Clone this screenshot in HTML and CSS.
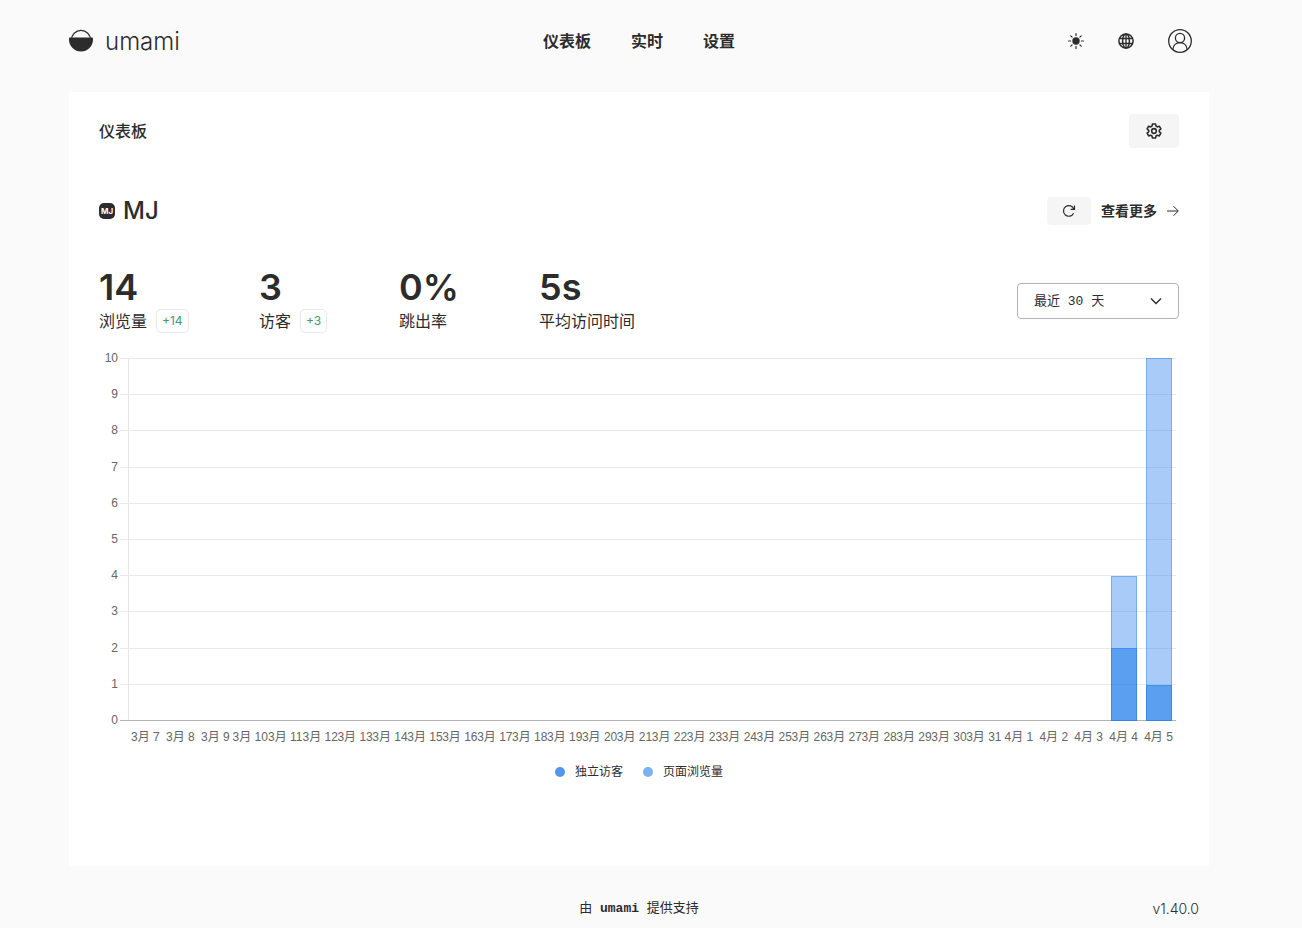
FILE: index.html
```html
<!DOCTYPE html>
<html lang="zh-CN">
<head>
<meta charset="utf-8">
<meta name="viewport" content="width=device-width, initial-scale=1">
<title>umami</title>
<link rel="stylesheet" href="styles.css">
</head>
<body>
<div class="container">
  <header class="header">
    <a class="brand" href="#">
      <svg width="24" height="24" viewBox="0 0 24 24" aria-hidden="true"><circle cx="12" cy="11" r="9.6" fill="none" stroke="#2c2c2c" stroke-width="1.200"/><path d="M0.6 8.600Q0 8.600 0 9.400V10.500a12 12 0 0 0 24 0V9.400Q24 8.600 23.400 8.600Z" fill="#2c2c2c"/></svg>
      <span>umami</span>
    </a>
    <nav class="nav"><a href="#">仪表板</a><a href="#">实时</a><a href="#">设置</a></nav>
    <div class="tools">
      <button class="icon-button" aria-label="主题"><svg width="16" height="16" viewBox="0 0 16 16" stroke="#2c2c2c" stroke-width="1.200" stroke-linecap="round"><circle cx="8" cy="8" r="3.700" fill="#2c2c2c" stroke="none"/><path d="M8 .6v2M8 13.400v2M.6 8h2M13.400 8h2M2.800 2.800l1.300 1.300M11.900 11.900l1.300 1.300M2.800 13.200l1.300-1.300M11.900 4.100l1.300-1.300"/></svg></button>
      <button class="icon-button" aria-label="语言"><svg width="16" height="16" viewBox="0 0 16 16" fill="none" stroke="#2c2c2c" stroke-width="1.500"><circle cx="8" cy="8" r="7.100"/><ellipse cx="8" cy="8" rx="3.400" ry="7.100"/><path d="M8 .8v14.400M1.300 5.500h13.400M1.300 10.500h13.400" stroke-width="1.300"/></svg></button>
      <button class="icon-button profile" aria-label="账户"><svg width="24" height="24" viewBox="0 0 24 24" fill="none" stroke="#2c2c2c" stroke-width="1.300"><circle cx="12" cy="12" r="11.300"/><circle cx="12" cy="9" r="4.600"/><path d="M4.800 20.600c.4-4.200 3.300-7 7.200-7s6.800 2.800 7.200 7"/></svg></button>
    </div>
  </header>

  <main class="card">
    <div class="row title-row">
      <h1>仪表板</h1>
      <button class="settings" aria-label="设置"><svg width="16" height="16" viewBox="0 0 24 24" fill="none" stroke="#2c2c2c" stroke-width="2.400" stroke-linejoin="round"><circle cx="12" cy="12" r="3.500"/><path d="M9.700 1.500h4.600l.7 3.200 1.900 1.100 3.100-1 2.300 4-2.400 2.200v2.100l2.400 2.200-2.300 4-3.100-1-1.900 1.100-.7 3.200H9.700L9 19.400l-1.900-1.100-3.100 1-2.300-4 2.400-2.200V11L1.700 8.800l2.300-4 3.100 1L9 4.700z"/></svg></button>
    </div>

    <div class="row site-row">
      <h2><span class="favicon">MJ</span>MJ</h2>
      <div class="site-actions">
        <button class="refresh" aria-label="刷新"><svg width="14" height="14" viewBox="0 0 14 14" fill="none" stroke="#2c2c2c" stroke-width="1.200"><path d="M11.600 9.200A5.300 5.300 0 1 1 11.800 5.200M12.500 1.400v4H8.600"/></svg></button>
        <a class="more" href="#">查看更多<svg width="12" height="12" viewBox="0 0 12 12" fill="none" stroke="#2c2c2c"><path d="M0 6h11M6.500 1.200L11.300 6l-4.800 4.800"/></svg></a>
      </div>
    </div>

    <div class="row stats-row">
      <div class="metrics">
        <div class="metric"><strong>14</strong><div class="label">浏览量<span class="change">+14</span></div></div>
        <div class="metric"><strong>3</strong><div class="label">访客<span class="change">+3</span></div></div>
        <div class="metric"><strong>0%</strong><div class="label">跳出率</div></div>
        <div class="metric"><strong>5s</strong><div class="label">平均访问时间</div></div>
      </div>
      <div class="select-wrap">
        <select aria-label="日期范围"><option>最近 30 天</option></select>
        <svg width="12" height="12" viewBox="0 0 12 12" fill="none" stroke="#2c2c2c" stroke-width="1.400"><path d="M1 3.500l5 5 5-5"/></svg>
      </div>
    </div>

    <div class="chart">
      <div class="y-axis"><span>10</span><span>9</span><span>8</span><span>7</span><span>6</span><span>5</span><span>4</span><span>3</span><span>2</span><span>1</span><span>0</span></div>
      <div class="plot">
        <div class="grid-lines"><i></i><i></i><i></i><i></i><i></i><i></i><i></i><i></i><i></i><i></i></div>
        <div class="bars">
          <div class="day day-29"><div class="views" style="height:40%"></div><div class="visitors" style="height:20%"></div></div>
          <div class="day day-30"><div class="views" style="height:100%"></div><div class="visitors" style="height:10%"></div></div>
        </div>
      </div>
      <div class="x-axis">
        <span>3月 7</span><span>3月 8</span><span>3月 9</span><span>3月 10</span><span>3月 11</span><span>3月 12</span><span>3月 13</span><span>3月 14</span><span>3月 15</span><span>3月 16</span><span>3月 17</span><span>3月 18</span><span>3月 19</span><span>3月 20</span><span>3月 21</span><span>3月 22</span><span>3月 23</span><span>3月 24</span><span>3月 25</span><span>3月 26</span><span>3月 27</span><span>3月 28</span><span>3月 29</span><span>3月 30</span><span>3月 31</span><span>4月 1</span><span>4月 2</span><span>4月 3</span><span>4月 4</span><span>4月 5</span>
      </div>
    </div>
    <div class="legend"><span class="key"><i class="dot"></i>独立访客</span><span class="key"><i class="dot light"></i>页面浏览量</span></div>
  </main>

  <footer class="footer">
    <p>由 <a href="#">umami</a> 提供支持</p>
    <a class="version" href="#">v1.40.0</a>
  </footer>
</div>
</body>
</html>
```
FILE: styles.css
```css
* { box-sizing: border-box; }
body {
  margin: 0;
  padding: 0 24px 0 0;
  background: #fafafa;
  color: #2c2c2c;
  font-family: Inter, "Noto Sans CJK SC", sans-serif;
  font-size: 16px;
}
a { color: inherit; text-decoration: none; }
button { border: 0; padding: 0; background: none; cursor: pointer; display: flex; align-items: center; justify-content: center; }
svg { display: block; flex: none; }
h1, h2, p { margin: 0; }

.container { max-width: 1140px; margin: 0 auto; }

.header {
  display: grid;
  grid-template-columns: 1fr auto 1fr;
  align-items: center;
  height: 82px;
  margin-bottom: 10px;
}
.brand { display: flex; align-items: center; gap: 12px; font-size: 24px; font-weight: 300; }
.nav { display: flex; gap: 40px; font-weight: 700; line-height: 24px; }
.tools { display: flex; align-items: center; justify-content: flex-end; gap: 34px; padding-right: 17px; }

.card { background: #fff; padding: 22px 30px 85px; }
.row { display: flex; align-items: center; justify-content: space-between; }
.title-row { margin-bottom: 49px; }
.title-row h1 { font-size: 16px; font-weight: 500; line-height: 24px; }
.settings { width: 50px; height: 34px; border-radius: 4px; background: #f5f5f5; }

.site-row h2 { display: flex; align-items: center; gap: 8px; font-size: 24px; font-weight: 500; line-height: 28px; }
.favicon {
  width: 16px;
  height: 16px;
  border-radius: 5px;
  background: #2c2c2c;
  color: #fff;
  font-size: 8px;
  font-weight: 700;
  line-height: 16px;
  text-align: center;
}
.site-actions { display: flex; align-items: center; gap: 10px; }
.refresh { width: 44px; height: 28px; border-radius: 4px; background: #f5f5f5; }
.more { display: flex; align-items: center; gap: 10px; font-size: 14px; font-weight: 700; line-height: 20px; }

.stats-row { margin-top: 41px; }
.metrics { display: grid; grid-template-columns: 160px 140px 140px auto; }
.metric strong { display: block; font-size: 36px; font-weight: 600; line-height: 43px; }
.label { display: flex; align-items: center; gap: 9px; height: 24px; line-height: 24px; white-space: nowrap; }
.change {
  padding: 0 5px;
  border: 1px solid #eaeaea;
  border-radius: 5px;
  color: #44987a;
  font-size: 12px;
  line-height: 22px;
}
.select-wrap { display: grid; align-items: center; width: 162px; margin-top: 3px; }
.select-wrap > * { grid-area: 1 / 1; }
.select-wrap svg { justify-self: end; margin-right: 17px; pointer-events: none; }
select {
  appearance: none;
  width: 100%;
  height: 36px;
  padding: 0 16px;
  border: 1px solid #b3b3b3;
  border-radius: 4px;
  background: #fff;
  color: #2c2c2c;
  font: 13px "Liberation Mono", "Noto Sans CJK SC", monospace;
}

.chart {
  display: grid;
  grid-template-columns: 29px 1fr;
  grid-template-rows: 363px 32px;
  margin-top: 25px;
  padding-right: 3px;
  color: #666;
  font: 12px/14px "Liberation Sans", "Noto Sans CJK SC", sans-serif;
}
.y-axis { display: flex; flex-direction: column; justify-content: space-between; margin: -7px 10px -6px 0; text-align: right; }
.plot { display: grid; border-left: 1px solid #e6e6e6; }
.grid-lines, .bars { grid-area: 1 / 1; }
.grid-lines { display: flex; flex-direction: column; margin-left: -9px; border-bottom: 1px solid #b3b3b3; }
.grid-lines i { flex: 1; border-top: 1px solid #eaeaea; }
.bars { display: grid; grid-template-columns: repeat(30, 1fr); }
.day { display: grid; margin: 0 4px 0 5px; }
.day-29 { grid-column: 29; }
.day-30 { grid-column: 30; }
.views, .visitors { grid-area: 1 / 1; align-self: end; border: 1px solid rgba(38, 128, 235, 0.4); }
.views { background: rgba(38, 128, 235, 0.4); }
.visitors { background: rgba(38, 128, 235, 0.6); }
.x-axis { grid-column: 2; display: grid; grid-template-columns: repeat(30, minmax(0, 1fr)); padding-top: 9px; }
.x-axis span { display: flex; justify-content: center; white-space: nowrap; }

.legend { display: flex; justify-content: center; gap: 20px; margin-top: 10px; font-size: 12px; line-height: 18px; }
.key { display: flex; align-items: center; gap: 10px; }
.dot { width: 10px; height: 10px; border-radius: 50%; background: #5195ec; }
.light { background: #7db1f1; }

.footer {
  display: grid;
  grid-template-columns: 1fr auto 1fr;
  align-items: center;
  padding: 33px 10px 6px;
  line-height: 20px;
}
.footer p { grid-column: 2; font-family: "Liberation Mono", "Noto Sans CJK SC", monospace; font-size: 13px; }
.footer p a { font-weight: 700; }
.version { justify-self: end; font-size: 14px; font-weight: 300; }
```
